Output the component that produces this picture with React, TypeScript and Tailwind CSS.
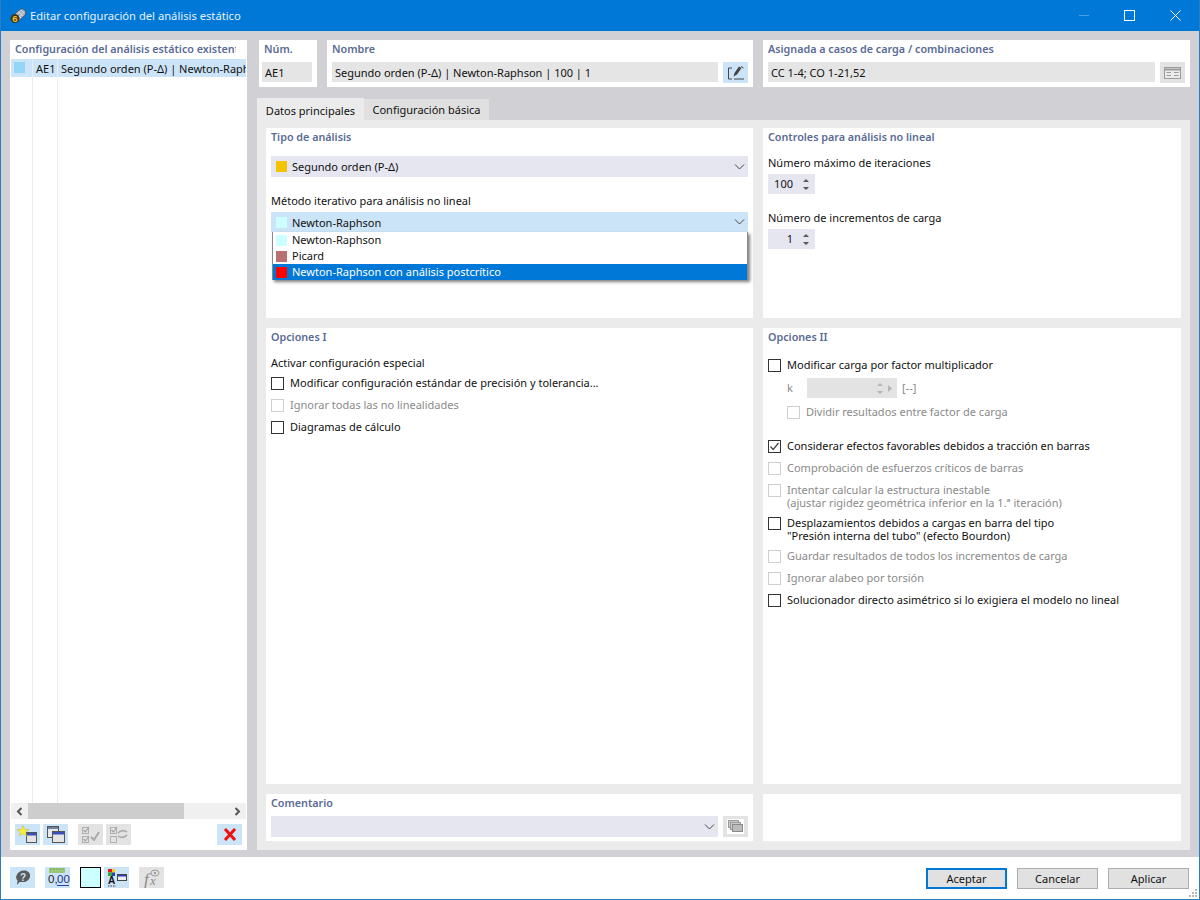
import React from "react";

const F = "font-['Noto_Sans',sans-serif]";
const title = "text-[10.75px] leading-[16px] font-semibold text-[#5a6b96]";

function Chevron() {
  return (
    <svg width="11" height="6" viewBox="0 0 11 6" className="shrink-0">
      <path d="M1 .5 5.500 5 10 .5" fill="none" stroke="#444" strokeWidth="1" />
    </svg>
  );
}

function Check({ on, off }: { on?: boolean; off?: boolean }) {
  return (
    <span className={`relative w-[13px] h-[13px] shrink-0 border bg-white ${off ? "border-[#cfcfcf]" : "border-[#333]"}`}>
      {on && (
        <svg width="11" height="11" viewBox="0 0 11 11" className="absolute left-0 top-0">
          <path d="M1.500 5.500 4.200 8.500 9.500 2" fill="none" stroke="#444" strokeWidth="1.200" />
        </svg>
      )}
    </span>
  );
}

function Opt({ text, on, off, className = "" }: { text: React.ReactNode; on?: boolean; off?: boolean; className?: string }) {
  return (
    <div className={`flex items-start gap-[6px] ${off ? "text-[#8a8a8a]" : "text-[#111]"} ${className}`}>
      <span className="flex items-center h-[16px]"><Check on={on} off={off} /></span>
      <span className="leading-[13px] pt-[1px]">{text}</span>
    </div>
  );
}

function Combo({ color, text, bg = "bg-[#e6e6f0]", h = "h-[21px]", tp = "pt-[1px]" }: { color?: string; text?: string; bg?: string; h?: string; tp?: string }) {
  return (
    <div className={`flex items-center ${h} ${bg} pl-[5px] pr-[3px]`}>
      {color && <span className="w-[11px] h-[11px] mr-[5px]" style={{ background: color }} />}
      <span className={`flex-1 leading-[16px] ${tp}`}>{text}</span>
      <Chevron />
    </div>
  );
}

function Spin({ v }: { v: string }) {
  return (
    <div className="flex items-center justify-end w-[47px] h-[20px] bg-[#e6e6f0] pr-[6px]">
      <span className="mr-[10px]">{v}</span>
      <svg width="6" height="13" viewBox="0 0 6 13">
        <path d="M3 1 6 4H0Z M0 9H6L3 12Z" fill="#555" />
      </svg>
    </div>
  );
}

function IconBtn({ children, off, className = "" }: { children?: React.ReactNode; off?: boolean; className?: string }) {
  return (
    <div className={`flex items-center justify-center w-[25px] h-[21px] shrink-0 ${off ? "bg-[#e3e3e3]" : "bg-[#cce4f7]"} ${className}`}>
      {children}
    </div>
  );
}

function App() {
  return (
    <div className={`w-[1200px] h-[900px] flex flex-col bg-white border-x border-b border-[#2b7cc0] text-[11px] text-[#111] overflow-hidden ${F}`}>
      {/* Title bar */}
      <div className="h-[31px] shrink-0 bg-[#0078d7] flex items-center text-white pl-[9px]">
        <svg width="17" height="17" viewBox="0 0 17 17" className="mr-[3px]">
          <path d="M4 8 10 2.500C11.500 1.500 14 2 15 3.500 16 5 15.800 7 14.500 8.500L9 13.500Z" fill="#a9adb5" stroke="#444" strokeWidth=".6" />
          <path d="M6 6.500 11 11M8 4.500 13 9M10.500 3 14.500 6.500M5.500 9 10 4.500M8 11.500 13 6" stroke="#e9edf2" strokeWidth=".7" fill="none" />
          <circle cx="5" cy="11.500" r="4.500" fill="#3a3a2a" />
          <text x="2.300" y="15" fontSize="9.500" fontWeight="700" fill="#f5bf1c" fontFamily="Liberation Sans">6</text>
        </svg>
        <span className="flex-1 pt-px text-[11.2px] text-[#e6f1fb]">Editar configuración del análisis estático</span>
        <div className="w-[10px] h-px bg-[#4f9fe0] mr-[35px]" />
        <div className="w-[11px] h-[11px] border border-white mr-[35px]" />
        <svg width="11" height="11" viewBox="0 0 11 11" className="mr-[18px]">
          <path d="M.5 .5 10.500 10.500M10.500 .5 .5 10.500" stroke="#fff" strokeWidth="1" />
        </svg>
      </div>

      {/* Body */}
      <div className="flex-1 min-h-0 bg-[#d0d0d5] flex gap-[10px] pt-[9px] pb-[7px] pl-[9px] pr-[9px]">
        {/* Left list panel */}
        <div className="w-[237px] shrink-0 bg-white flex flex-col px-px">
          <div className="h-[19px] pt-[1px] pl-[4px] w-[225px]">
            <div className={`${title} overflow-hidden whitespace-nowrap`}>Configuración del análisis estático existentes</div>
          </div>
          <div className="relative flex-1 min-h-0">
            <div className="flex h-[18px] bg-[#cce4f7] whitespace-nowrap overflow-hidden items-center">
              <span className="w-[22px] h-full shrink-0 pl-[3px] pt-[3px] border-r border-[#e8eef5]">
                <span className="block w-[11px] h-[11px] bg-[#93d6f7]" />
              </span>
              <span className="w-[25px] h-full shrink-0 pl-[3px] leading-[19px] border-r border-[#e8eef5]">AE1</span>
              <span className="pl-[3px] leading-[19px]">Segundo orden (P-Δ) | Newton-Raphson | 100 | 1</span>
            </div>
            <div className="flex h-[726px]">
              <span className="w-[22px] border-r border-[#ececec]" />
              <span className="w-[25px] border-r border-[#ececec]" />
            </div>
          </div>
          <div className="h-[16px] bg-[#f0f0f0] flex items-center">
            <span className="w-[17px] flex justify-center">
              <svg width="7" height="9" viewBox="0 0 7 9"><path d="M5.500 1 2 4.500 5.500 8" fill="none" stroke="#555" strokeWidth="2" /></svg>
            </span>
            <span className="w-[156px] h-full bg-[#cdcdcd]" />
            <span className="flex-1" />
            <span className="w-[17px] flex justify-center">
              <svg width="7" height="9" viewBox="0 0 7 9"><path d="M1.500 1 5 4.500 1.500 8" fill="none" stroke="#555" strokeWidth="2" /></svg>
            </span>
          </div>
          <div className="h-[31px] flex items-start pt-[5px] pl-[4px] pr-[4px]">
            <IconBtn>
              <svg width="25" height="21" viewBox="0 0 25 21">
                <rect x="11.500" y="8.500" width="10" height="10" fill="#e4e4e4" stroke="#555" />
                <rect x="12" y="9" width="9" height="2.500" fill="#3a4fb8" />
                <path d="M8 1.500 9.500 5.500H14L10.500 8 11.700 12 8 9.700 4.300 12 5.500 8 2 5.500H6.500Z" fill="#f8ee3c" stroke="#c9b82a" strokeWidth=".5" />
              </svg>
            </IconBtn>
            <IconBtn className="ml-[3px]">
              <svg width="25" height="21" viewBox="0 0 25 21">
                <rect x="4.500" y="2.500" width="11" height="11" fill="#e8e8e8" stroke="#555" />
                <rect x="5" y="3" width="10" height="2" fill="#6f7fa0" />
                <rect x="9.500" y="7.500" width="12" height="11" fill="#e4e4e4" stroke="#555" />
                <rect x="10" y="8" width="11" height="2.500" fill="#3a4fb8" />
              </svg>
            </IconBtn>
            <IconBtn off className="ml-[10px]">
              <svg width="25" height="21" viewBox="0 0 25 21">
                <rect x="4.500" y="3.500" width="6" height="6" fill="none" stroke="#b0b0b0" />
                <rect x="4.500" y="12.500" width="6" height="6" fill="none" stroke="#b0b0b0" />
                <path d="M5.500 6 7.500 8 11 3M5.500 15 7.500 17 11 12" fill="none" stroke="#a0a0a0" strokeWidth="1.100" />
                <path d="M13 13 16 16 21 8" fill="none" stroke="#a8a8a8" strokeWidth="2" />
              </svg>
            </IconBtn>
            <IconBtn off className="ml-[3px]">
              <svg width="25" height="21" viewBox="0 0 25 21">
                <rect x="4.500" y="3.500" width="6" height="6" fill="none" stroke="#b0b0b0" />
                <rect x="4.500" y="12.500" width="6" height="6" fill="none" stroke="#b0b0b0" />
                <path d="M5.500 6 7.500 8 11 3" fill="none" stroke="#a0a0a0" strokeWidth="1.100" />
                <path d="M12 9C15 6 18 6 21 8M12 12C15 14 18 14 21 11" fill="none" stroke="#a8a8a8" strokeWidth="1.500" />
              </svg>
            </IconBtn>
            <span className="flex-1" />
            <IconBtn>
              <svg width="14" height="13" viewBox="0 0 14 13">
                <path d="M2 1 12 12M12 1 2 12" stroke="#ee1111" strokeWidth="3" />
              </svg>
            </IconBtn>
          </div>
        </div>

        {/* Right area */}
        <div className="flex-1 min-w-0 flex flex-col">
          {/* Top cards */}
          <div className="flex h-[47px] shrink-0 pl-[2px] gap-[10px]">
            <div className="w-[58px] bg-white px-[3px] flex flex-col">
              <div className={`${title} h-[22px] pt-[1px] pl-[2px]`}>Núm.</div>
              <div className="h-[20px] w-[50px] bg-[#e5e5e5] pl-[3px] leading-[21px]">AE1</div>
            </div>
            <div className="w-[426px] bg-white pl-[5px] pr-[5px] flex flex-col">
              <div className={`${title} h-[22px] pt-[1px]`}>Nombre</div>
              <div className="flex gap-[5px]">
                <div className="flex-1 h-[20px] bg-[#e5e5e5] pl-[3px] leading-[21px]">Segundo orden (P-Δ) | Newton-Raphson | 100 | 1</div>
                <IconBtn>
                  <svg width="18" height="16" viewBox="0 0 18 16">
                    <path d="M5 3H1.500V14H5M7 14H17" fill="none" stroke="#444" />
                    <path d="M6.500 11.500 7.500 8 12 1.500 14.500 3 10 9.500Z" fill="#444" />
                    <path d="M14 1.500 16.500 3" stroke="#444" />
                  </svg>
                </IconBtn>
              </div>
            </div>
            <div className="flex-1 bg-white pl-[5px] pr-[5px] flex flex-col">
              <div className={`${title} h-[22px] pt-[1px]`}>Asignada a casos de carga / combinaciones</div>
              <div className="flex gap-[5px]">
                <div className="flex-1 h-[20px] bg-[#e5e5e5] pl-[3px] leading-[21px]">CC 1-4; CO 1-21,52</div>
                <IconBtn off>
                  <svg width="17" height="12" viewBox="0 0 17 12">
                    <rect x=".5" y=".5" width="16" height="11" fill="#ececec" stroke="#9a9a9a" />
                    <path d="M1 2.500H16" stroke="#9a9a9a" strokeWidth="2" />
                    <path d="M2.500 5.500H7M10 5.500H14.500M2.500 8.500H7M10 8.500H14.500" stroke="#9a9a9a" />
                  </svg>
                </IconBtn>
              </div>
            </div>
          </div>

          {/* Tabs */}
          <div className="flex items-end h-[33px] shrink-0">
            <div className="h-[23px] w-[107px] bg-[#ebebeb] text-center leading-[26px] -mb-px relative">Datos principales</div>
            <div className="h-[21px] w-[125px] bg-[#e0e0e0] text-center leading-[22px]">Configuración básica</div>
          </div>

          {/* Tab panel */}
          <div className="flex-1 min-h-0 bg-[#ebebeb] pt-[8px] pl-[9px] pr-[9px] pb-[9px] grid grid-cols-[487px_418px] grid-rows-[190px_456px_47px] gap-x-[10px] gap-y-[10px]">
            {/* Tipo de analisis */}
            <div className="relative bg-white px-[5px]">
              <div className={`${title} h-[28px] pt-[1px]`}>Tipo de análisis</div>
              <Combo color="#f5c400" text="Segundo orden (P-Δ)" />
              <div className="h-[35px] pt-[16px] leading-[16px]">Método iterativo para análisis no lineal</div>
              <Combo color="#ccffff" text="Newton-Raphson" bg="bg-[#cce4f7]" h="h-[20px]" tp="pt-[2px]" />
              <div className="absolute left-[6px] top-[104px] w-[476px] h-[48px] bg-white border-x border-b border-[#8a8a8a] shadow-[2px_2px_3px_rgba(0,0,0,0.5)] flex flex-col">
                {[
                  ["#ccffff", "Newton-Raphson", false],
                  ["#b87070", "Picard", false],
                  ["#ff0000", "Newton-Raphson con análisis postcrítico", true],
                ].map(([c, t, sel]) => (
                  <div key={t as string} className={`h-[16px] flex items-center pl-[3px] ${sel ? "bg-[#0078d7] text-white" : ""}`}>
                    <span className="w-[11px] h-[11px] mr-[5px]" style={{ background: c as string }} />
                    {t as string}
                  </div>
                ))}
              </div>
            </div>

            {/* Controles */}
            <div className="bg-white px-[5px]">
              <div className={`${title} h-[27px] pt-[1px]`}>Controles para análisis no lineal</div>
              <div className="h-[19px] leading-[16px]">Número máximo de iteraciones</div>
              <Spin v="100" />
              <div className="h-[35px] pt-[16px] leading-[16px]">Número de incrementos de carga</div>
              <Spin v="1" />
            </div>

            {/* Opciones I */}
            <div className="bg-white px-[5px]">
              <div className={`${title} h-[27px] pt-[1px]`}>Opciones I</div>
              <div className="h-[20px] leading-[16px]">Activar configuración especial</div>
              <div className="flex flex-col gap-[6px]">
                <Opt text="Modificar configuración estándar de precisión y tolerancia..." />
                <Opt off text="Ignorar todas las no linealidades" />
                <Opt text="Diagramas de cálculo" />
              </div>
            </div>

            {/* Opciones II */}
            <div className="bg-white px-[5px]">
              <div className={`${title} h-[29px] pt-[1px]`}>Opciones II</div>
              <Opt text="Modificar carga por factor multiplicador" />
              <div className="flex items-center h-[20px] mt-[5px] pl-[19px] text-[#8a8a8a]">
                <span className="w-[20px]">k</span>
                <div className="w-[90px] h-[20px] bg-[#e3e3e3] flex items-center justify-end pr-[5px] gap-[5px]">
                  <svg width="6" height="13" viewBox="0 0 6 13"><path d="M3 1 6 4H0Z M0 9H6L3 12Z" fill="#b5b5b5" /></svg>
                  <svg width="4" height="7" viewBox="0 0 4 7"><path d="M0 0 4 3.500 0 7Z" fill="#b5b5b5" /></svg>
                </div>
                <span className="ml-[5px]">[--]</span>
              </div>
              <Opt off className="mt-[6px] pl-[19px]" text="Dividir resultados entre factor de carga" />
              <Opt on className="mt-[18px]" text="Considerar efectos favorables debidos a tracción en barras" />
              <Opt off className="mt-[6px]" text="Comprobación de esfuerzos críticos de barras" />
              <Opt off className="mt-[6px]" text={<>Intentar calcular la estructura inestable<br />(ajustar rigidez geométrica inferior en la 1.ª iteración)</>} />
              <Opt className="mt-[6px]" text={<>Desplazamientos debidos a cargas en barra del tipo<br />"Presión interna del tubo" (efecto Bourdon)</>} />
              <Opt off className="mt-[6px]" text="Guardar resultados de todos los incrementos de carga" />
              <Opt off className="mt-[6px]" text="Ignorar alabeo por torsión" />
              <Opt className="mt-[6px]" text="Solucionador directo asimétrico si lo exigiera el modelo no lineal" />
            </div>

            {/* Comentario */}
            <div className="bg-white px-[5px]">
              <div className={`${title} h-[22px] pt-[1px]`}>Comentario</div>
              <div className="flex gap-[5px]">
                <div className="flex-1"><Combo /></div>
                <IconBtn off>
                  <svg width="17" height="15" viewBox="0 0 17 15">
                    <rect x="0" y="0" width="17" height="15" fill="#fff" />
                    <rect x="1.500" y="1.500" width="10" height="7" fill="#ccc" stroke="#9a9a9a" />
                    <rect x="3.500" y="3.500" width="10" height="7" fill="#ccc" stroke="#9a9a9a" />
                    <rect x="5.500" y="5.500" width="10" height="7" fill="#bbb" stroke="#8a8a8a" />
                  </svg>
                </IconBtn>
              </div>
            </div>
            <div className="bg-white" />
          </div>
        </div>
      </div>

      {/* Footer */}
      <div className="relative h-[42px] shrink-0 flex items-start pt-[10px] pl-[9px] pr-[10px] bg-white">
        <IconBtn>
          <svg width="18" height="17" viewBox="0 0 18 17">
            <path d="M10 1.500C14 1.500 16.500 4 16 7.500 15.500 11 12.500 13 9 13L5.500 13 3 16 3.500 11.500C2 10 1.800 8.500 2.500 6.500 3.500 3.500 6.500 1.500 10 1.500Z" fill="#5a5a5a" />
            <text x="6" y="11.500" fontSize="10" fontWeight="700" fill="#cce4f7" fontFamily="Liberation Sans">?</text>
          </svg>
        </IconBtn>
        <IconBtn className="ml-[10px]">
          <svg width="25" height="21" viewBox="0 0 25 21">
            <rect x="4" y="1" width="16" height="5" fill="#9ac77a" />
            <path d="M6 1V3M9 1V3M12 1V3M15 1V3M18 1V3" stroke="#6fa54e" strokeWidth=".8" />
            <text x="3" y="16" fontSize="11.500" fill="#222" fontFamily="Liberation Sans">0,</text>
            <text x="12" y="16" fontSize="11.500" fill="#1f2f8a" fontFamily="Liberation Sans">00</text>
            <path d="M12 18.500H24" stroke="#2a3f9e" />
          </svg>
        </IconBtn>
        <div className="ml-[10px] w-[21px] h-[21px] bg-[#ccffff] border border-black" />
        <IconBtn className="ml-[3px]">
          <svg width="25" height="21" viewBox="0 0 25 21">
            <rect x="4" y="2" width="4" height="3.500" fill="#e01b1b" />
            <rect x="8" y="2" width="3" height="3.500" fill="#f3d21b" />
            <rect x="4" y="5.500" width="4" height="3.500" fill="#2ea83a" />
            <rect x="8" y="5.500" width="3" height="3.500" fill="#2a3fb8" />
            <text x="4" y="17" fontSize="10" fontWeight="700" fill="#111" fontFamily="Liberation Sans">A</text>
            <rect x="13.500" y="7.500" width="9" height="6" fill="#eee" stroke="#444" />
            <rect x="14" y="8" width="8" height="1.500" fill="#2a3fb8" />
            <path d="M4 19H12" stroke="#444" strokeDasharray="1.500 1" />
          </svg>
        </IconBtn>
        <IconBtn off className="ml-[10px]">
          <svg width="25" height="21" viewBox="0 0 25 21">
            <text x="5" y="18" fontSize="17" fontStyle="italic" fill="#8a8a8a" fontFamily="Liberation Serif">f</text>
            <text x="11" y="18" fontSize="13" fontStyle="italic" fill="#8a8a8a" fontFamily="Liberation Serif">x</text>
            <ellipse cx="16" cy="6" rx="4" ry="3" fill="none" stroke="#9a9a9a" />
            <circle cx="16" cy="6" r="1.200" fill="#9a9a9a" />
          </svg>
        </IconBtn>
        <div className="flex-1" />
        <div className="flex gap-[10px] pt-px">
          <div className="w-[81px] h-[21px] bg-[#e1e1e1] border-2 border-[#0078d7] flex items-center justify-center pt-px">Aceptar</div>
          <div className="w-[81px] h-[21px] bg-[#e1e1e1] border border-[#adadad] flex items-center justify-center pt-px">Cancelar</div>
          <div className="w-[81px] h-[21px] bg-[#e1e1e1] border border-[#adadad] flex items-center justify-center pt-px">Aplicar</div>
        </div>
        <svg width="10" height="10" viewBox="0 0 10 10" className="absolute right-[1px] bottom-[1px]">
          <path d="M7 1h2v2H7zM4 4h2v2H4zM7 4h2v2H7zM1 7h2v2H1zM4 7h2v2H4zM7 7h2v2H7z" fill="#b8b8b8" />
        </svg>
      </div>
    </div>
  );
}

export default App;
